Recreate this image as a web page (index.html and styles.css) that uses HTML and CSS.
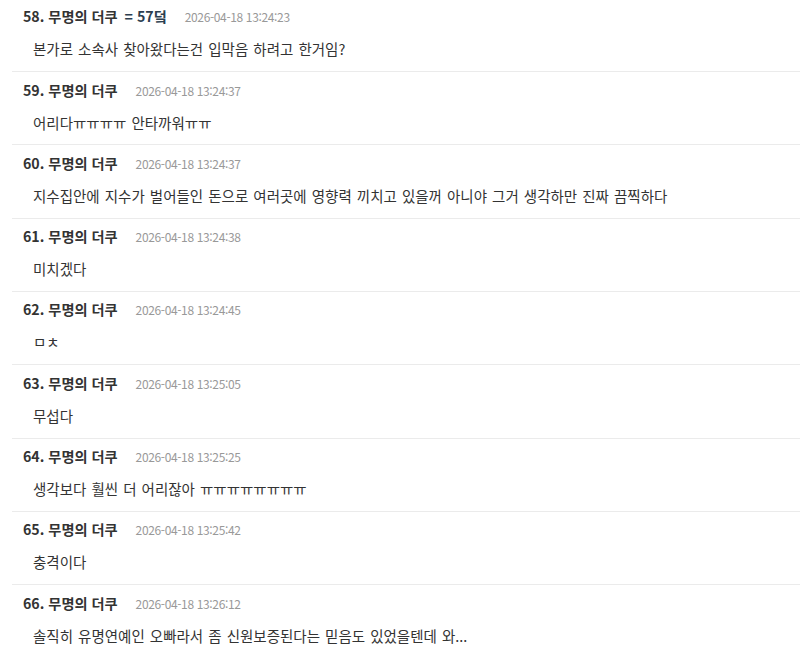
FILE: index.html
```html
<!DOCTYPE html>
<html lang="ko">
<head>
<meta charset="utf-8">
<link rel="stylesheet" href="styles.css">
</head>
<body>
<ul class="list">
  <li class="item">
    <div class="head"><span class="name">58. 무명의 더쿠</span><span class="tag">= 57덬</span><span class="date">2026-04-18 13:24:23</span></div>
    <div class="text">본가로 소속사 찾아왔다는건 입막음 하려고 한거임?</div>
  </li>
  <li class="item">
    <div class="head"><span class="name">59. 무명의 더쿠</span><span class="date">2026-04-18 13:24:37</span></div>
    <div class="text">어리다ㅠㅠㅠㅠ 안타까워ㅠㅠ</div>
  </li>
  <li class="item">
    <div class="head"><span class="name">60. 무명의 더쿠</span><span class="date">2026-04-18 13:24:37</span></div>
    <div class="text">지수집안에 지수가 벌어들인 돈으로 여러곳에 영향력 끼치고 있을꺼 아니야 그거 생각하만 진짜 끔찍하다</div>
  </li>
  <li class="item">
    <div class="head"><span class="name">61. 무명의 더쿠</span><span class="date">2026-04-18 13:24:38</span></div>
    <div class="text">미치겠다</div>
  </li>
  <li class="item">
    <div class="head"><span class="name">62. 무명의 더쿠</span><span class="date">2026-04-18 13:24:45</span></div>
    <div class="text">ㅁㅊ</div>
  </li>
  <li class="item">
    <div class="head"><span class="name">63. 무명의 더쿠</span><span class="date">2026-04-18 13:25:05</span></div>
    <div class="text">무섭다</div>
  </li>
  <li class="item">
    <div class="head"><span class="name">64. 무명의 더쿠</span><span class="date">2026-04-18 13:25:25</span></div>
    <div class="text">생각보다 훨씬 더 어리잖아 ㅠㅠㅠㅠㅠㅠㅠㅠ</div>
  </li>
  <li class="item">
    <div class="head"><span class="name">65. 무명의 더쿠</span><span class="date">2026-04-18 13:25:42</span></div>
    <div class="text">충격이다</div>
  </li>
  <li class="item">
    <div class="head"><span class="name">66. 무명의 더쿠</span><span class="date">2026-04-18 13:26:12</span></div>
    <div class="text">솔직히 유명연예인 오빠라서 좀 신원보증된다는 믿음도 있었을텐데 와...</div>
  </li>
</ul>
</body>
</html>
```
FILE: styles.css
```css
html, body {
  margin: 0;
  padding: 0;
  background: #fff;
}
body {
  font-family: "Noto Sans CJK KR", "Noto Sans", sans-serif;
  color: #333;
  overflow: hidden;
}
.list {
  list-style: none;
  margin: -1.33px 0 0 12px;
  padding: 0;
}
.item {
  border-bottom: 1px solid #ebebeb;
  padding: 7.5px 0 10.83px 11px;
}
.head {
  display: flex;
  align-items: baseline;
  height: 20px;
  line-height: 20px;
}
.name {
  font-size: 14.2px;
  font-weight: 700;
  color: #333;
}
.tag {
  font-size: 14.2px;
  font-weight: 700;
  color: #2c3e50;
  margin-left: 7px;
}
.date {
  font-size: 12px;
  letter-spacing: -0.35px;
  color: #999;
  margin-left: 18px;
}
.text {
  margin-top: 12px;
  padding-left: 10px;
  font-size: 14.5px;
  word-spacing: 1px;
  line-height: 22px;
  color: #333;
}
```
